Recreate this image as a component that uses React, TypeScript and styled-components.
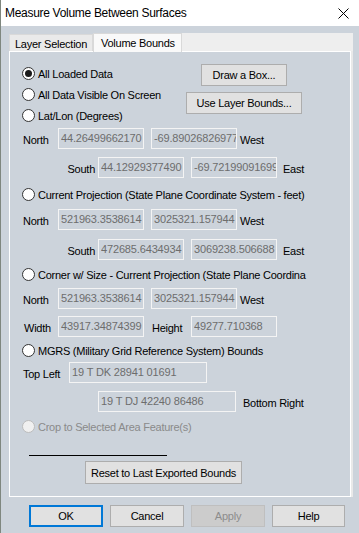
import React from "react";
import styled, { createGlobalStyle, css } from "styled-components";

const GlobalStyle = createGlobalStyle`
  html, body { margin: 0; padding: 0; background: #ccd3db; }
  * { box-sizing: border-box; }
`;

const UI_FONT = `"Liberation Sans", Arial, sans-serif`;

const Window = styled.div`
  width: 359px;
  height: 533px;
  background: #ccd3db;
  border-left: 1px solid #7f877f;
  display: flex;
  flex-direction: column;
  font-family: ${UI_FONT};
  font-size: 11px;
  color: #000;
  letter-spacing: -0.25px;
  overflow: hidden;
`;

const TitleBar = styled.div`
  height: 26px;
  flex: none;
  background: #ffffff;
  display: flex;
  align-items: center;
  justify-content: space-between;
  padding: 0 10px 0 4px;
`;

const Title = styled.span`
  font-size: 12px;
  letter-spacing: -0.3px;
  color: #000;
`;

const Body = styled.div`
  flex: 1;
  display: flex;
  flex-direction: column;
  padding: 7px 6px 0 8px;
`;

const TabControl = styled.div`
  display: flex;
  flex-direction: column;
  width: 344px;
`;

const TabStrip = styled.div`
  height: 18px;
  display: flex;
  align-items: flex-end;
  position: relative;
  z-index: 1;
`;

const Tab = styled.div<{ $active?: boolean; $w: number }>`
  width: ${(p) => p.$w}px;
  display: flex;
  align-items: center;
  border: 1px solid #d9d9d9;
  border-bottom: none;
  ${(p) =>
    p.$active
      ? css`
          height: 19px;
          margin-bottom: -1px;
          background: #f9f9f9;
          padding: 0 0 1px 7px;
        `
      : css`
          height: 17px;
          background: #eaeaea;
          padding: 1px 0 0 5px;
        `}
`;

const TabFiller = styled.div`
  flex: 1;
  height: 18px;
  background: #eeeeee;
`;

const Panel = styled.div`
  width: 342px;
  height: 446px;
  border: 1px solid #ffffff;
  box-shadow: 2px 0 0 #e9e9e9;
  background: #ccd3db;
  padding: 11px 12px 0 12px;
  display: flex;
  flex-direction: column;
`;

const TopBlock = styled.div`
  height: 63px;
  display: flex;
`;

const LeftCol = styled.div`
  width: 163px;
  display: flex;
  flex-direction: column;
`;

const RightCol = styled.div`
  width: 118px;
  display: flex;
  flex-direction: column;
  align-items: center;
  gap: 6px;
  padding-top: 1px;
`;

const Button = styled.button<{ $w: number; $h?: number; $ml?: number; $mt?: number; $default?: boolean }>`
  width: ${(p) => p.$w}px;
  height: ${(p) => p.$h ?? 22}px;
  margin-left: ${(p) => p.$ml ?? 0}px;
  margin-top: ${(p) => p.$mt ?? 0}px;
  flex: none;
  background: #e1e1e1;
  border: 1px solid #adadad;
  border-radius: 0;
  font-family: ${UI_FONT};
  font-size: 11px;
  letter-spacing: -0.25px;
  color: #000;
  padding: 0;
  display: flex;
  align-items: center;
  justify-content: center;
  ${(p) =>
    p.$default &&
    css`
      border: 2px solid #0078d7;
    `}
  &:disabled {
    background: #cccccc;
    border-color: #bfbfbf;
    color: #8c8c8c;
  }
`;

const RadioRow = styled.div<{ $mt?: number; $disabled?: boolean }>`
  height: 21px;
  flex: none;
  margin-top: ${(p) => p.$mt ?? 0}px;
  display: flex;
  align-items: center;
  gap: 3px;
  white-space: nowrap;
  color: ${(p) => (p.$disabled ? "#8a8a8a" : "#000")};
`;

const RadioCircle = styled.span<{ $checked?: boolean; $disabled?: boolean }>`
  width: 13px;
  height: 13px;
  flex: none;
  border-radius: 50%;
  border: 1px solid ${(p) => (p.$disabled ? "#bcbcbc" : "#333333")};
  background: ${(p) => (p.$disabled ? "#f0f0f0" : "#ffffff")};
  display: flex;
  align-items: center;
  justify-content: center;
  &::after {
    content: "";
    width: 7px;
    height: 7px;
    border-radius: 50%;
    background: #1a1a1a;
    display: ${(p) => (p.$checked ? "block" : "none")};
  }
`;

const FieldRow = styled.div<{ $mt?: number }>`
  height: 21px;
  flex: none;
  margin-top: ${(p) => p.$mt ?? 0}px;
  display: flex;
  align-items: center;
`;

const FieldLabel = styled.span<{ $w: number; $right?: boolean; $pl?: number }>`
  width: ${(p) => p.$w}px;
  flex: none;
  text-align: ${(p) => (p.$right ? "right" : "left")};
  padding-left: ${(p) => p.$pl ?? 0}px;
  padding-right: ${(p) => (p.$right ? 3 : 0)}px;
  padding-top: 2px;
  white-space: nowrap;
`;

const TextBox = styled.input<{ $w: number; $ml?: number }>`
  width: ${(p) => p.$w}px;
  height: 21px;
  margin: 0 0 0 ${(p) => p.$ml ?? 0}px;
  flex: none;
  border: 1px solid #f4f4f4;
  border-radius: 0;
  background: #ccd3db;
  color: #6d6d6d;
  font-family: ${UI_FONT};
  font-size: 11px;
  letter-spacing: -0.15px;
  padding: 0 0 1px 2px;
  outline: none;
`;

const SideLabel = styled.span<{ $ml: number }>`
  margin-left: ${(p) => p.$ml}px;
  padding-top: 2px;
  white-space: nowrap;
`;

const Rule = styled.div`
  width: 138px;
  height: 1px;
  margin: 18px 0 0 7px;
  background: #000;
  flex: none;
`;

const ButtonBar = styled.div`
  display: flex;
  justify-content: flex-end;
  gap: 7px;
  padding: 8px 8px 0 0;
`;

const CloseIcon = () => (
  <svg width="11" height="11" viewBox="0 0 11 11">
    <path d="M0.5 0.5 L10.5 10.5 M10.5 0.5 L0.5 10.5" stroke="#000" strokeWidth="1" fill="none" />
  </svg>
);

const Radio = ({ label, checked, disabled, mt }: { label: string; checked?: boolean; disabled?: boolean; mt?: number }) => (
  <RadioRow $mt={mt} $disabled={disabled}>
    <RadioCircle $checked={checked} $disabled={disabled} />
    <span>{label}</span>
  </RadioRow>
);

export default function App() {
  return (
    <>
      <GlobalStyle />
      <Window>
        <TitleBar>
          <Title>Measure Volume Between Surfaces</Title>
          <CloseIcon />
        </TitleBar>
        <Body>
          <TabControl>
            <TabStrip>
              <Tab $w={84}>Layer Selection</Tab>
              <Tab $w={89} $active>Volume Bounds</Tab>
              <TabFiller />
            </TabStrip>
            <Panel>
              <TopBlock>
                <LeftCol>
                  <Radio label="All Loaded Data" checked />
                  <Radio label="All Data Visible On Screen" />
                  <Radio label="Lat/Lon (Degrees)" />
                </LeftCol>
                <RightCol>
                  <Button $w={86}>Draw a Box...</Button>
                  <Button $w={116}>Use Layer Bounds...</Button>
                </RightCol>
              </TopBlock>

              <FieldRow $mt={2}>
                <FieldLabel $w={36} $pl={1}>North</FieldLabel>
                <TextBox $w={86} readOnly value="44.26499662170" />
                <TextBox $w={86} $ml={7} readOnly value="-69.89026826977" />
                <SideLabel $ml={3}>West</SideLabel>
              </FieldRow>
              <FieldRow $mt={8}>
                <FieldLabel $w={76} $right>South</FieldLabel>
                <TextBox $w={86} readOnly value="44.12929377490" />
                <TextBox $w={86} $ml={7} readOnly value="-69.72199091699" />
                <SideLabel $ml={6}>East</SideLabel>
              </FieldRow>

              <Radio mt={6} label="Current Projection (State Plane Coordinate System - feet)" />
              <FieldRow $mt={4}>
                <FieldLabel $w={36} $pl={1}>North</FieldLabel>
                <TextBox $w={86} readOnly value="521963.3538614" />
                <TextBox $w={86} $ml={7} readOnly value="3025321.157944" />
                <SideLabel $ml={3}>West</SideLabel>
              </FieldRow>
              <FieldRow $mt={9}>
                <FieldLabel $w={76} $right>South</FieldLabel>
                <TextBox $w={86} readOnly value="472685.6434934" />
                <TextBox $w={86} $ml={7} readOnly value="3069238.506688" />
                <SideLabel $ml={6}>East</SideLabel>
              </FieldRow>

              <Radio mt={4} label="Corner w/ Size - Current Projection (State Plane Coordina" />
              <FieldRow $mt={3}>
                <FieldLabel $w={36} $pl={1}>North</FieldLabel>
                <TextBox $w={86} readOnly value="521963.3538614" />
                <TextBox $w={86} $ml={7} readOnly value="3025321.157944" />
                <SideLabel $ml={3}>West</SideLabel>
              </FieldRow>
              <FieldRow $mt={7}>
                <FieldLabel $w={36} $pl={2}>Width</FieldLabel>
                <TextBox $w={86} readOnly value="43917.34874399" />
                <FieldLabel $w={47} $pl={8}>Height</FieldLabel>
                <TextBox $w={86} readOnly value="49277.710368" />
              </FieldRow>

              <Radio mt={3} label="MGRS (Military Grid Reference System) Bounds" />
              <FieldRow $mt={1}>
                <FieldLabel $w={47} $pl={1}>Top Left</FieldLabel>
                <TextBox $w={138} readOnly value="19 T DK 28941 01691" />
              </FieldRow>
              <FieldRow $mt={8}>
                <FieldLabel $w={76} />
                <TextBox $w={138} readOnly value="19 T DJ 42240 86486" />
                <SideLabel $ml={7}>Bottom Right</SideLabel>
              </FieldRow>

              <Radio mt={4} label="Crop to Selected Area Feature(s)" disabled />

              <Rule />
              <Button $w={157} $h={23} $ml={63} $mt={5}>Reset to Last Exported Bounds</Button>
            </Panel>
          </TabControl>
          <ButtonBar>
            <Button $w={74} $default>OK</Button>
            <Button $w={74}>Cancel</Button>
            <Button $w={74} disabled>Apply</Button>
            <Button $w={73}>Help</Button>
          </ButtonBar>
        </Body>
      </Window>
    </>
  );
}
